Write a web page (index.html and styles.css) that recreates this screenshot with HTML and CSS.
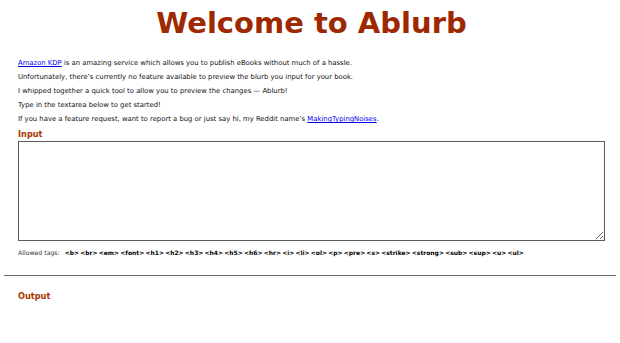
FILE: index.html
```html
<!DOCTYPE html>
<html lang="en">
<head>
<meta charset="utf-8">
<title>Ablurb</title>
<link rel="stylesheet" href="styles.css">
</head>
<body>
<div class="page">
  <header class="top">
    <h1 class="title">Welcome to Ablurb</h1>
  </header>
  <section class="intro">
    <p class="line"><a href="#" class="link">Amazon KDP</a> is an amazing service which allows you to publish eBooks without much of a hassle.</p>
    <p class="line">Unfortunately, there’s currently no feature available to preview the blurb you input for your book.</p>
    <p class="line">I whipped together a quick tool to allow you to preview the changes — Ablurb!</p>
    <p class="line">Type in the textarea below to get started!</p>
    <p class="line">If you have a feature request, want to report a bug or just say hi, my Reddit name’s <a href="#" class="link">MakingTypingNoises</a>.</p>
  </section>
  <section class="editor">
    <h2 class="label">Input</h2>
    <textarea class="input"></textarea>
    <div class="tags"><span class="tags-label">Allowed tags:</span><span class="tag-list"><b>&lt;b&gt;</b><b>&lt;br&gt;</b><b>&lt;em&gt;</b><b>&lt;font&gt;</b><b>&lt;h1&gt;</b><b>&lt;h2&gt;</b><b>&lt;h3&gt;</b><b>&lt;h4&gt;</b><b>&lt;h5&gt;</b><b>&lt;h6&gt;</b><b>&lt;hr&gt;</b><b>&lt;i&gt;</b><b>&lt;li&gt;</b><b>&lt;ol&gt;</b><b>&lt;p&gt;</b><b>&lt;pre&gt;</b><b>&lt;s&gt;</b><b>&lt;strike&gt;</b><b>&lt;strong&gt;</b><b>&lt;sub&gt;</b><b>&lt;sup&gt;</b><b>&lt;u&gt;</b><b>&lt;ul&gt;</b></span></div>
  </section>
</div>
<hr class="rule">
<div class="page">
  <section class="output">
    <h2 class="label">Output</h2>
  </section>
</div>
</body>
</html>
```

FILE: styles.css
```css
html, body {
  background: #ffffff;
}
body {
  margin: 0;
  padding: 4px;
  font-family: "DejaVu Sans", Verdana, sans-serif;
  color: #000;
}
.page {
  padding: 0 11px 0 14px;
}
.top {
  padding-top: 2px;
}
.title {
  margin: 0;
  text-align: center;
  font-size: 29px;
  line-height: 34px;
  font-weight: bold;
  color: #9e2800;
}
.intro {
  padding-top: 19px;
  display: flex;
  flex-direction: column;
  gap: 6px;
}
.line {
  margin: 0;
  font-size: 6.85px;
  line-height: 8px;
  color: #111;
}
.link {
  color: #0000ee;
  text-decoration: underline;
}
.editor {
  padding-top: 6px;
}
.label {
  margin: 0 0 2px 0;
  font-size: 8.2px;
  line-height: 10px;
  font-weight: bold;
  color: #a83800;
}
.input {
  display: block;
  box-sizing: border-box;
  width: 587px;
  height: 100px;
  margin: 0;
  border: 1px solid #5a5a5a;
  padding: 2px;
  resize: vertical;
  background: #fff;
}
.tags {
  margin-top: 8px;
  line-height: 7px;
  display: flex;
  align-items: baseline;
}
.tags-label {
  font-size: 6.2px;
  color: #333;
  margin-right: 5px;
}
.tag-list {
  display: flex;
  gap: 1.2px;
  font-size: 6px;
}
.tag-list b {
  font-weight: bold;
  color: #000;
}
.rule {
  margin: 19px 0 0 0;
  border: 0;
  border-top: 1px solid #6a6a6a;
  height: 0;
}
.output {
  padding-top: 15px;
}
```
